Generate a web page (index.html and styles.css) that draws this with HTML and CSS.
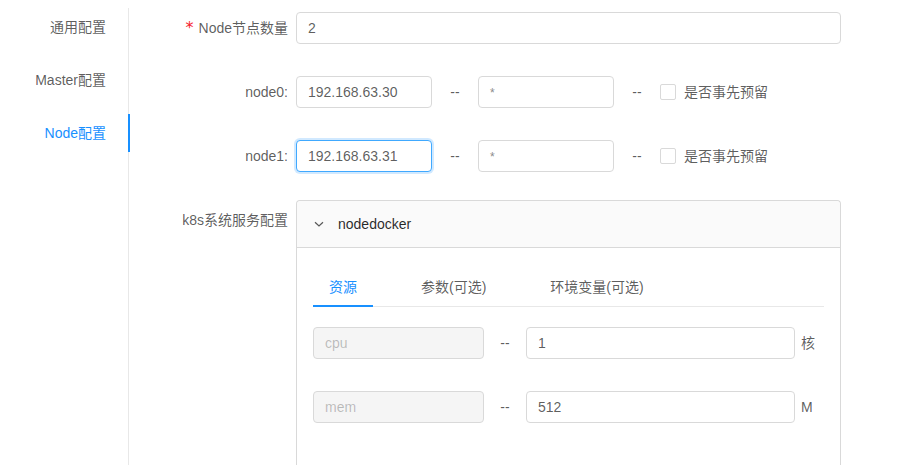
FILE: index.html
```html
<!DOCTYPE html>
<html lang="zh-CN">
<head>
<meta charset="utf-8">
<title>Node配置</title>
<link rel="stylesheet" href="styles.css">
</head>
<body>
<div class="page">
  <nav class="side">
    <div class="side-item">通用配置</div>
    <div class="side-item">Master配置</div>
    <div class="side-item active">Node配置</div>
  </nav>
  <main class="main">
    <div class="row">
      <div class="label"><span class="req">*</span>Node节点数量</div>
      <div class="control"><div class="input full">2</div></div>
    </div>
    <div class="row">
      <div class="label">node0:</div>
      <div class="control">
        <div class="input ip">192.168.63.30</div>
        <span class="sep">--</span>
        <div class="input ip"><span class="star">*</span></div>
        <span class="sep">--</span>
        <span class="check"></span><span class="check-text">是否事先预留</span>
      </div>
    </div>
    <div class="row">
      <div class="label">node1:</div>
      <div class="control">
        <div class="input ip focus">192.168.63.31</div>
        <span class="sep">--</span>
        <div class="input ip"><span class="star">*</span></div>
        <span class="sep">--</span>
        <span class="check"></span><span class="check-text">是否事先预留</span>
      </div>
    </div>
    <div class="row last">
      <div class="label">k8s系统服务配置</div>
      <div class="control-block">
        <div class="panel">
          <div class="panel-head">
            <svg class="arrow" width="12" height="12" viewBox="0 0 12 12"><path d="M2 4.2 L6 8 L10 4.2" fill="none" stroke="#595959" stroke-width="1.2"/></svg>
            <span>nodedocker</span>
          </div>
          <div class="panel-body">
            <div class="tabs">
              <div class="tab active">资源</div>
              <div class="tab">参数(可选)</div>
              <div class="tab">环境变量(可选)</div>
            </div>
            <div class="res-row">
              <div class="input disabled name">cpu</div>
              <span class="sep2">--</span>
              <div class="input val">1</div>
              <span class="unit">核</span>
            </div>
            <div class="res-row">
              <div class="input disabled name">mem</div>
              <span class="sep2">--</span>
              <div class="input val">512</div>
              <span class="unit">M</span>
            </div>
          </div>
        </div>
      </div>
    </div>
  </main>
</div>
</body>
</html>
```

FILE: styles.css
```css
* { box-sizing: border-box; }
html, body { margin: 0; padding: 0; background: #fff; }
body {
  font-family: "Liberation Sans", "Noto Sans CJK SC", sans-serif;
  font-size: 14px;
  color: rgba(0, 0, 0, 0.65);
  line-height: 22px;
}
.page {
  display: flex;
  align-items: stretch;
  min-height: 465px;
}
.side {
  width: 129px;
  flex: none;
  margin-top: 8px;
  border-right: 1px solid #e8e8e8;
}
.side-item {
  position: relative;
  padding: 8px 22px 8px 0;
  margin-bottom: 15px;
  text-align: right;
  line-height: 22px;
}
.side-item.active { color: #1890ff; }
.side-item.active::after {
  content: "";
  position: absolute;
  right: -2px;
  top: 0;
  bottom: 0;
  width: 2px;
  background: #1890ff;
}
.main {
  flex: 1;
  padding-top: 8px;
}
.row {
  display: flex;
  margin-bottom: 24px;
}
.row.last { margin-bottom: 0; }
.label {
  width: 167px;
  flex: none;
  text-align: right;
  padding-right: 8px;
  line-height: 40px;
  white-space: nowrap;
}
.req {
  color: #f5222d;
  margin-right: 5px;
  font-size: 16px;
  font-family: "DejaVu Sans", sans-serif;
}
.control {
  width: 545px;
  height: 40px;
  display: flex;
  align-items: center;
}
.control-block { width: 545px; }
.input {
  height: 32px;
  border: 1px solid #d9d9d9;
  border-radius: 4px;
  padding: 4px 11px;
  line-height: 22px;
  background: #fff;
  color: rgba(0, 0, 0, 0.65);
  white-space: nowrap;
}
.input.full { width: 545px; }
.input.ip { width: 136px; }
.input.focus {
  border-color: #40a9ff;
  box-shadow: 0 0 0 2px rgba(24, 144, 255, 0.2);
}
.star { font-size: 12px; color: #8c8c8c; }
.sep {
  width: 46px;
  text-align: center;
  flex: none;
}
.check {
  width: 16px;
  height: 16px;
  border: 1px solid #d9d9d9;
  border-radius: 2px;
  flex: none;
}
.check-text { padding-left: 8px; }
.panel {
  border: 1px solid #d9d9d9;
  border-bottom: none;
  border-radius: 4px 4px 0 0;
  height: 265px;
  overflow: hidden;
}
.panel-head {
  display: flex;
  align-items: center;
  height: 47px;
  padding: 0 16px;
  background: #fafafa;
  border-bottom: 1px solid #d9d9d9;
  border-radius: 4px 4px 0 0;
  color: rgba(0, 0, 0, 0.85);
}
.arrow { margin-right: 13px; flex: none; }
.panel-body { padding: 16px 16px 0; }
.tabs {
  display: flex;
  border-bottom: 1px solid #e8e8e8;
  margin-bottom: 16px;
}
.tab {
  position: relative;
  padding: 12px 16px 8px;
  margin-right: 32px;
  line-height: 22px;
}
.tab.active { color: #1890ff; }
.tab.active::after {
  content: "";
  position: absolute;
  left: 0;
  right: 0;
  bottom: -1px;
  height: 2px;
  background: #1890ff;
}
.res-row {
  display: flex;
  align-items: center;
  height: 40px;
  margin-bottom: 24px;
}
.input.disabled {
  background: #f5f5f5;
  color: rgba(0, 0, 0, 0.25);
}
.input.name { width: 171px; }
.sep2 { width: 42px; text-align: center; flex: none; }
.input.val { width: 269px; }
.unit { padding-left: 6px; }
```
